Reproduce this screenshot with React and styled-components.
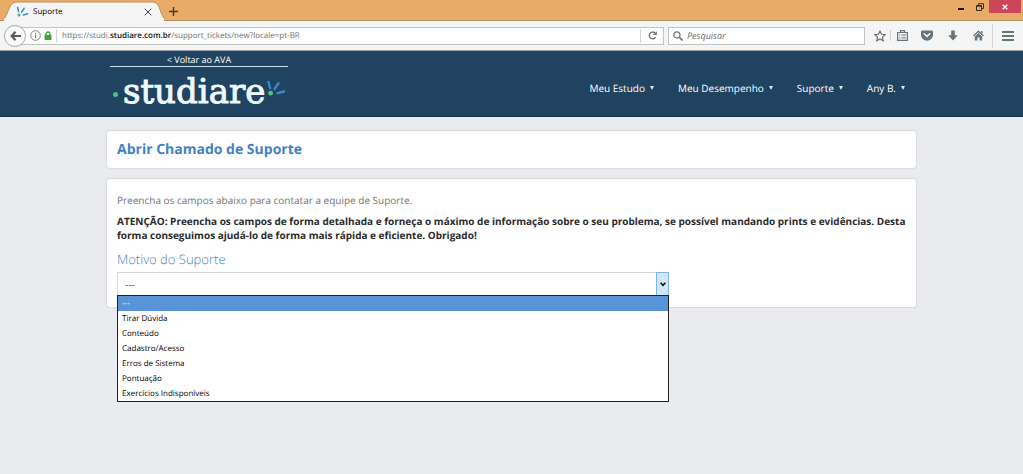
import React, { useState } from "react";
import styled, { createGlobalStyle } from "styled-components";

const GlobalStyle = createGlobalStyle`
  *, *::before, *::after { box-sizing: border-box; }
  body {
    margin: 0;
    background: #eaebee;
    font-family: "Open Sans", "Noto Sans", sans-serif;
    font-size: 10px;
    color: #333;
    text-rendering: geometricPrecision;
  }
  button, input, select { font-family: inherit; text-rendering: inherit; }
`;

const Page = styled.div`
  min-height: 100vh;
`;

/* ---------- browser window ---------- */

const TitleBar = styled.div`
  display: flex;
  align-items: stretch;
  height: 21px;
  padding-left: 4px;
  background: #e9ac68;
  box-shadow: inset 0 -1px #b98f63;
`;

const TabShape = styled.svg`
  position: absolute;
  inset: 0;
  width: 100%;
  height: 100%;
`;

const Tab = styled.div`
  position: relative;
  display: flex;
  align-items: center;
  width: 160px;
  padding: 2px 11px 0 12px;
`;

const TabTitle = styled.span`
  position: relative;
  flex: 1;
  margin-left: 4px;
  font-size: 8px;
  line-height: 12px;
  color: #000;
`;

const IconButton = styled.button`
  position: relative;
  display: flex;
  align-items: center;
  justify-content: center;
  flex: none;
  width: ${(p) => p.$w || 24}px;
  height: ${(p) => p.$h || 20}px;
  padding: 0;
  border: 0;
  background: none;
  color: ${(p) => p.$color || "#69737a"};
  cursor: pointer;
`;

const WindowControls = styled.div`
  display: flex;
  margin-left: auto;
  padding-right: 2px;
`;

const CloseWindow = styled(IconButton)`
  background: #cc4659;
`;

const Toolbar = styled.div`
  display: flex;
  align-items: center;
  height: 30px;
  padding: 0 0 0 4px;
  background: #f5f5f5;
  border-bottom: 1px solid #9a9fa5;
`;

const BackButton = styled(IconButton)`
  z-index: 1;
  margin-right: -11px;
  border: 1px solid #aaa;
  border-radius: 50%;
  background: #fbfbfb;
  color: #555b60;
`;

const Field = styled.div`
  display: flex;
  align-items: center;
  height: 18px;
  border: 1px solid #c3c3c3;
  background: #fff;
`;

const AddressField = styled(Field)`
  flex: 1;
  padding-left: 12px;
`;

const SearchField = styled(Field)`
  width: 197px;
  margin: 0 4px;
  padding-left: 4px;
`;

const Divider = styled.span`
  flex: none;
  width: 1px;
  height: ${(p) => p.$h || 14}px;
  background: #d5d5d5;
`;

const AddressBox = styled.div`
  position: relative;
  flex: 1;
  align-self: stretch;
  display: flex;
  align-items: center;
  margin-left: 4px;
  font-size: 8px;
  color: #707070;
  white-space: nowrap;

  b { font-weight: 600; color: #111; }
`;

const AddressInput = styled.input`
  position: absolute;
  inset: 0;
  width: 100%;
  padding: 0;
  border: 0;
  outline: 0;
  opacity: 0;
  font-size: 8px;
  background: #fff;

  &:focus { opacity: 1; }
`;

const SearchInput = styled.input`
  flex: 1;
  min-width: 0;
  margin-left: 4px;
  padding: 0;
  border: 0;
  outline: 0;
  font-size: 9px;
  background: none;

  &::placeholder { color: #6b6b6b; font-style: italic; opacity: 1; }
`;

/* ---------- site ---------- */

const Container = styled.div`
  width: calc(100% - 48px);
  max-width: 811px;
  margin: 0 auto;
`;

const Header = styled.header`
  background: #1f4361;
  border-bottom: 1px solid #17324a;
`;

const HeaderRow = styled(Container)`
  display: flex;
  align-items: stretch;
  justify-content: space-between;
  height: 65px;
  padding: 0 12px 0 4px;
`;

const Brand = styled.div`
  width: 178px;
`;

const BackLink = styled.a`
  display: block;
  padding-top: 2px;
  border-bottom: 1px solid #c9dbe8;
  font-size: 9px;
  line-height: 13px;
  text-align: center;
  color: #fff;
  text-decoration: none;
`;

const Logo = styled.a`
  display: flex;
  align-items: center;
  height: 50px;
  padding-left: 3px;
  color: #eef9ff;
  text-decoration: none;
`;

const LogoDot = styled.span`
  width: 5px;
  height: 5px;
  margin-top: 4px;
  border-radius: 50%;
  background: #45c486;
`;

const LogoText = styled.span`
  margin: 0 1px 0 5px;
  font-family: "DejaVu Serif", "Liberation Serif", serif;
  font-size: 34px;
  line-height: 48px;
  -webkit-text-stroke: 1px #eef9ff;
`;

const LogoRays = styled.span`
  display: flex;
  padding-bottom: 9px;
`;

const Nav = styled.nav`
  display: flex;
  gap: 24px;
  align-items: center;
  padding-top: 8px;
`;

const NavButton = styled.button`
  display: flex;
  align-items: center;
  gap: 5px;
  padding: 0;
  border: 0;
  background: none;
  font-size: 10px;
  line-height: 16px;
  color: #fff;
  cursor: pointer;
`;

const Caret = styled.span`
  border: 2px solid transparent;
  border-top: 4px solid #dfe8ef;
  border-bottom: 0;
`;

const Main = styled(Container)`
  display: flex;
  flex-direction: column;
  gap: 9px;
  padding: 13px 0 24px;
`;

const Card = styled.section`
  padding: ${(p) => p.$pad};
  border: 1px solid #dcdee1;
  border-radius: 4px;
  background: #fff;
  box-shadow: 0 0 1px #d3d6d9;
`;

const Title = styled.h1`
  margin: 0;
  font-size: 14px;
  line-height: 20px;
  font-weight: 700;
  color: #3f82c6;
`;

const Intro = styled.p`
  margin: 0 0 7px;
  line-height: 14px;
  color: #757575;
`;

const Notice = styled.p`
  margin: 0 0 7px;
  line-height: 14px;
  font-weight: 700;
  color: #2b2b2b;
`;

const Label = styled.label`
  display: block;
  margin-bottom: 3px;
  font-size: 13px;
  line-height: 20px;
  font-weight: 300;
  color: #3f82c6;
`;

const SelectWrap = styled.div`
  position: relative;
  width: 70%;
`;

const SelectArrow = styled.span`
  position: absolute;
  top: 0;
  right: 0;
  display: flex;
  align-items: center;
  justify-content: center;
  width: 13px;
  height: 24px;
  border: 1px solid #7fb5dc;
  background: #cfe8f9;
  pointer-events: none;
`;

const Select = styled.select`
  display: block;
  width: 100%;
  height: 24px;
  padding: 0 7px;
  border: 1px solid #d9d9d9;
  border-radius: 0;
  outline: 0;
  background: #fff;
  appearance: none;
  font-size: 10px;
  color: #333;
`;

const OptionList = styled.ul`
  position: absolute;
  z-index: 2;
  top: 100%;
  left: 0;
  right: 0;
  margin: -1px 0 0;
  padding: 0;
  border: 1px solid #222;
  background: #fff;
  list-style: none;
`;

const Option = styled.li`
  height: 15px;
  padding: 0 4px;
  font-size: 8px;
  line-height: 15px;
  color: ${(p) => (p.$active ? "#fff" : "#000")};
  background: ${(p) => (p.$active ? "#5a94d8" : "#fff")};
  cursor: default;
`;

const RaysSvg = styled.svg`
  position: relative;
  flex: none;
`;

const Rays = ({ width, height }) => (
  <RaysSvg width={width} height={height} viewBox="0 0 20 16" aria-hidden="true">
    <g stroke="#3f86cf" strokeWidth="2.4" strokeLinecap="round">
      <path d="M2.5 2l1.5 6" />
      <path d="M12.5 3.2L8.5 9" />
      <path d="M18 11.5l-6.5 1.7" />
    </g>
    <circle cx="4.6" cy="13.2" r="2.4" fill="#45c486" />
  </RaysSvg>
);

const reasons = [
  "---",
  "Tirar Dúvida",
  "Conteúdo",
  "Cadastro/Acesso",
  "Erros de Sistema",
  "Pontuação",
  "Exercícios Indisponíveis",
];

const menus = ["Meu Estudo", "Meu Desempenho", "Suporte", "Any B."];

function BrowserChrome() {
  return (
    <>
      <TitleBar>
        <Tab>
          <TabShape viewBox="0 0 160 21" preserveAspectRatio="none" aria-hidden="true">
            <path d="M-4 20.5C5 20.5 3 2 12 2H149C158 2 155 20.5 165 20.5V22H-4Z" fill="#f5f5f5" stroke="#b98f63" />
            <path d="M-3 21H164" stroke="#f5f5f5" />
          </TabShape>
          <Rays width={13} height={11} />
          <TabTitle>Suporte</TabTitle>
          <IconButton $w={10} $h={14} $color="#444" aria-label="Fechar aba">
            <svg width="8" height="8" viewBox="0 0 8 8" fill="none" stroke="currentColor"><path d="M.7.7l6.6 6.6M7.3.7L.7 7.3" /></svg>
          </IconButton>
        </Tab>
        <IconButton $w={18} $h={23} $color="#46382a" aria-label="Nova aba">
          <svg width="9" height="9" viewBox="0 0 9 9" fill="none" stroke="currentColor" strokeWidth="1.4"><path d="M4.5 0v9M0 4.5h9" /></svg>
        </IconButton>
        <WindowControls>
          <IconButton $w={20} $h={13} $color="#17120c" aria-label="Minimizar">
            <svg width="6" height="6" viewBox="0 0 6 6"><path d="M0 4h6v2H0z" fill="currentColor" /></svg>
          </IconButton>
          <IconButton $w={18} $h={13} $color="#3d2c18" aria-label="Restaurar">
            <svg width="8" height="8" viewBox="0 0 8 8" fill="none" stroke="currentColor"><path d="M.5 2.5h5v5h-5zM.5 3.2h5M2.5 2V.7h5V5.5H6" /></svg>
          </IconButton>
          <CloseWindow $w={32} $h={13} $color="#fff" aria-label="Fechar">
            <svg width="6" height="6" viewBox="0 0 6 6" fill="none" stroke="currentColor" strokeWidth="1.3"><path d="M.7.7l4.6 4.6M5.3.7L.7 5.3" /></svg>
          </CloseWindow>
        </WindowControls>
      </TitleBar>
      <Toolbar>
        <BackButton $w={22} $h={22} aria-label="Voltar">
          <svg width="11" height="10" viewBox="0 0 11 10" fill="none" stroke="currentColor" strokeWidth="2.2"><path d="M5.5.8L1.7 5l3.8 4.2M2 5h9" /></svg>
        </BackButton>
        <AddressField>
          <IconButton $w={14} $h={14} $color="#777" aria-label="Informações do site">
            <svg width="11" height="11" viewBox="0 0 11 11" fill="none" stroke="currentColor">
              <circle cx="5.5" cy="5.5" r="4.8" strokeWidth=".9" /><path d="M5.5 4.8v3.4M5.5 2.7v1.2" strokeWidth="1.1" />
            </svg>
          </IconButton>
          <IconButton $w={12} $h={14} $color="#3fa62f" aria-label="Conexão segura">
            <svg width="8" height="9" viewBox="0 0 8 9"><path d="M.5 4h7v5h-7z" fill="currentColor" /><path d="M2 4.5V3a2 2 0 014 0v1.5" fill="none" stroke="currentColor" strokeWidth="1.3" /></svg>
          </IconButton>
          <IconButton as="span" $w={4} $h={14}><Divider /></IconButton>
          <AddressBox>
            <span>https://studi.<b>studiare.com.br</b>/support_tickets/new?locale=pt-BR</span>
            <AddressInput aria-label="Endereço" defaultValue="https://studi.studiare.com.br/support_tickets/new?locale=pt-BR" />
          </AddressBox>
          <Divider />
          <IconButton $w={22} $h={16} aria-label="Recarregar">
            <svg width="9" height="9" viewBox="0 0 9 9" fill="none" stroke="currentColor" strokeWidth="1.4"><path d="M7.6 6.2A3.4 3.4 0 117 2" /><path d="M8.8.2v3.9H4.9z" fill="currentColor" stroke="none" /></svg>
          </IconButton>
        </AddressField>
        <SearchField>
          <svg width="10" height="10" viewBox="0 0 10 10" fill="none" stroke="#69737a" strokeWidth="1.3" aria-hidden="true"><circle cx="3.9" cy="3.9" r="3.1" /><path d="M6.2 6.2l3.3 3.3" strokeWidth="1.6" /></svg>
          <SearchInput aria-label="Pesquisar" placeholder="Pesquisar" />
        </SearchField>
        <IconButton $w={21} aria-label="Favoritar">
          <svg width="12" height="12" viewBox="0 0 12 12" fill="none" stroke="currentColor" strokeWidth="1.2"><path d="M6 1l1.5 3.3 3.6.4-2.7 2.4.8 3.6L6 8.9l-3.2 1.8.8-3.6L.9 4.7l3.6-.4z" /></svg>
        </IconButton>
        <Divider $h={11} />
        <IconButton $w={22} aria-label="Biblioteca">
          <svg width="11" height="11" viewBox="0 0 11 11" fill="none" stroke="currentColor"><path d="M.6 2.5h9.8v7.9H.6zM3.5 2.3V.7h4v1.6" strokeWidth="1.2" /><path d="M2 5h1.2M4.3 5H9M2 7.8h1.2M4.3 7.8H9" /></svg>
        </IconButton>
        <IconButton $w={28} aria-label="Pocket">
          <svg width="12" height="11" viewBox="0 0 12 11"><path d="M1.2.5h9.6q1.2 0 1.2 1.2v3a6 6 0 01-12 0v-3Q0 .5 1.2.5z" fill="currentColor" /><path d="M3.2 3.7L6 6.4l2.8-2.7" fill="none" stroke="#f5f5f5" strokeWidth="1.5" strokeLinecap="round" /></svg>
        </IconButton>
        <IconButton $w={24} aria-label="Downloads">
          <svg width="10" height="11" viewBox="0 0 10 11"><path d="M3.2.5h3.6v4.7h3L5 10.5.2 5.2h3z" fill="currentColor" /></svg>
        </IconButton>
        <IconButton $w={27} aria-label="Página inicial">
          <svg width="11" height="11" viewBox="0 0 11 11"><path d="M.6 6L5.5 1.2 10.4 6" fill="none" stroke="currentColor" strokeWidth="1.4" /><path d="M5.5 3.1L9.2 6.7v3.8H6.6V7.6H4.4v2.9H1.8V6.7zM8 1h1.5v3L8 2.6z" fill="currentColor" /></svg>
        </IconButton>
        <Divider $h={24} />
        <IconButton $w={30} aria-label="Menu">
          <svg width="12" height="10" viewBox="0 0 12 10"><path d="M0 0h12v2H0zM0 4h12v2H0zM0 8h12v2H0z" fill="currentColor" /></svg>
        </IconButton>
      </Toolbar>
    </>
  );
}

function ReasonSelect() {
  const [open, setOpen] = useState(true);
  const [value, setValue] = useState("---");

  const choose = (reason) => {
    setValue(reason);
    setOpen(false);
  };

  return (
    <>
      <Label htmlFor="reason">Motivo do Suporte</Label>
      <SelectWrap>
        <Select
          id="reason"
          value={value}
          onChange={(e) => setValue(e.target.value)}
          onMouseDown={(e) => {
            e.preventDefault();
            setOpen(!open);
          }}
        >
          {reasons.map((r) => <option key={r}>{r}</option>)}
        </Select>
        <SelectArrow>
          <svg width="6" height="5" viewBox="0 0 6 5" fill="none" stroke="#111" strokeWidth="1.6" aria-hidden="true"><path d="M.6.8L3 3.4 5.4.8" /></svg>
        </SelectArrow>
        {open && (
          <OptionList role="listbox" aria-label="Motivo do Suporte">
            {reasons.map((r) => (
              <Option key={r} role="option" aria-selected={r === value} $active={r === value} onClick={() => choose(r)}>
                {r}
              </Option>
            ))}
          </OptionList>
        )}
      </SelectWrap>
    </>
  );
}

export default function App() {
  return (
    <Page>
      <GlobalStyle />
      <BrowserChrome />
      <Header>
        <HeaderRow>
          <Brand>
            <BackLink href="#ava">&lt; Voltar ao AVA</BackLink>
            <Logo href="#inicio">
              <LogoDot />
              <LogoText>studiare</LogoText>
              <LogoRays><Rays width={20} height={16} /></LogoRays>
            </Logo>
          </Brand>
          <Nav>
            {menus.map((m) => (
              <NavButton key={m}>{m}<Caret /></NavButton>
            ))}
          </Nav>
        </HeaderRow>
      </Header>
      <Main as="main">
        <Card $pad="9px 10px 8px">
          <Title>Abrir Chamado de Suporte</Title>
        </Card>
        <Card $pad="14px 10px 11px">
          <Intro>Preencha os campos abaixo para contatar a equipe de Suporte.</Intro>
          <Notice>
            ATENÇÃO: Preencha os campos de forma detalhada e forneça o máximo de informação sobre o seu
            problema, se possível mandando prints e evidências. Desta forma conseguimos ajudá-lo de forma
            mais rápida e eficiente. Obrigado!
          </Notice>
          <ReasonSelect />
        </Card>
      </Main>
    </Page>
  );
}
